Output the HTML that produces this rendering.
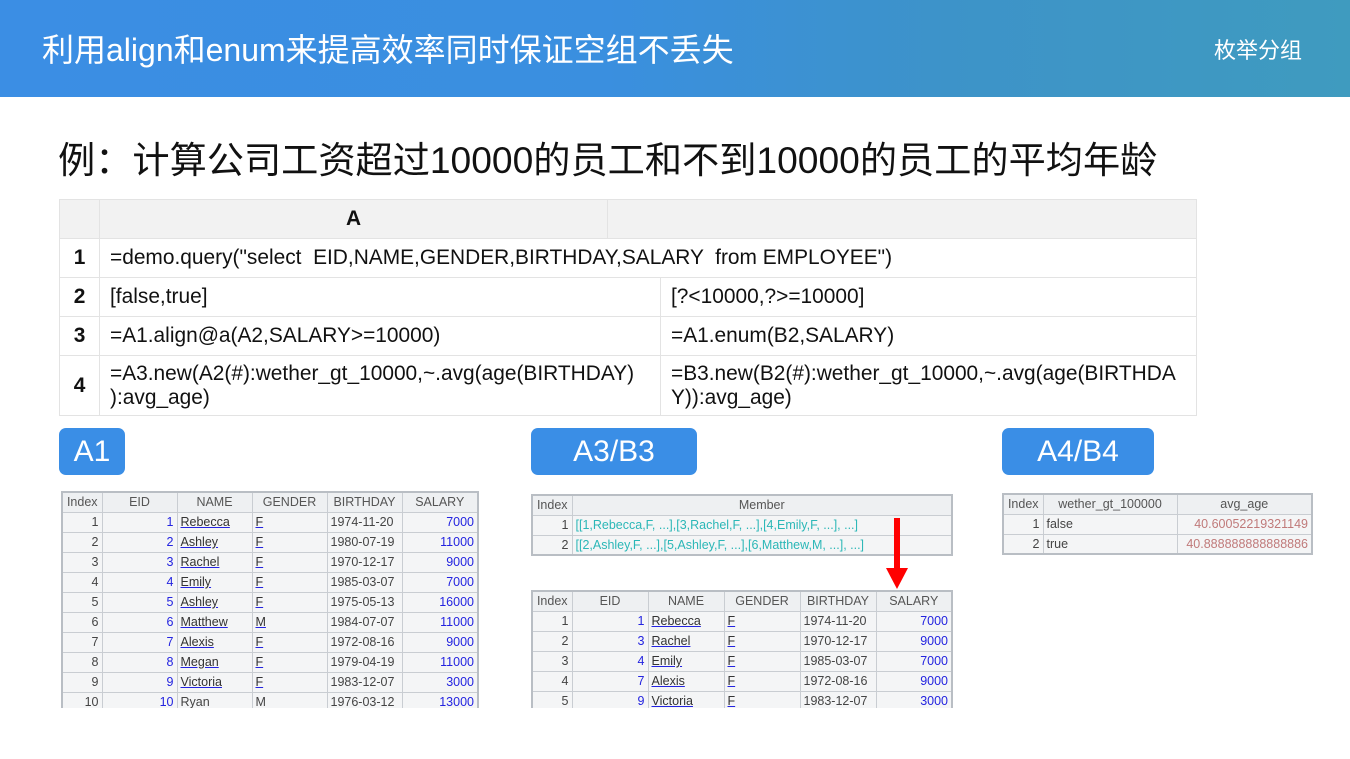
<!DOCTYPE html><html><head><meta charset="utf-8"><style>
*{margin:0;padding:0;box-sizing:border-box}
body{width:1350px;height:759px;background:#fff;position:relative;overflow:hidden;font-family:"Liberation Sans","Noto Sans CJK SC",sans-serif}
.hd{position:absolute;left:0;top:0;width:1350px;height:97px;background:linear-gradient(90deg,#3b8ee4 0%,#3a8fdf 45%,#3d93c9 70%,#3f9bbf 100%)}
.hd .t{position:absolute;left:42px;top:30px;color:#fff;font-size:32px;line-height:40px}
.hd .r{position:absolute;left:1214px;top:33px;color:#fff;font-size:22px}
.ttl{position:absolute;left:58px;top:130px;font-size:37.2px;color:#111}
.ab{position:absolute}
.cell{position:absolute;border:1px solid #e3e3e3;padding:0 10px;display:flex;align-items:center;line-height:24px;font-size:20.9px!important;color:#111}
.badge{position:absolute;background:#3a8ee6;color:#fff;font-size:30px;border-radius:7px;display:flex;align-items:center;justify-content:center;top:428px;height:47px}
table.g{position:absolute;border-collapse:collapse;font-size:12.5px;table-layout:fixed;border:2px solid #b9bec4}
table.g td{border:1px solid #c9cdd2;height:20px;padding:0 3px;white-space:nowrap;overflow:hidden;background:#f4f5f6;color:#444}
table.g tr:first-child td{text-align:center;color:#555;background:#eef0f2}
.n{text-align:right;color:#333}
.b{text-align:right;color:#2323e0!important}
.u{color:#333!important;text-decoration:underline;text-decoration-color:#2323e0}
.cy{color:#2bb7b7!important}
.rd{text-align:right;color:#c07a7a!important}
.k{justify-content:center;font-weight:bold}
</style></head><body>
<div class="hd"><div class="t">利用align和enum来提高效率同时保证空组不丢失</div><div class="r">枚举分组</div></div>
<div class="ttl">例：计算公司工资超过10000的员工和不到10000的员工的平均年龄</div>

<div class="cell" style="left:59px;top:199px;width:41px;height:40px;background:#f2f2f2"></div>
<div class="cell k" style="left:99px;top:199px;width:509px;height:40px;background:#f2f2f2">A</div>
<div class="cell" style="left:607px;top:199px;width:590px;height:40px;background:#f2f2f2"></div>

<div class="cell k" style="left:59px;top:238px;width:41px;height:40px">1</div>
<div class="cell" style="left:99px;top:238px;width:1098px;height:40px">=demo.query("select &nbsp;EID,NAME,GENDER,BIRTHDAY,SALARY &nbsp;from EMPLOYEE")</div>

<div class="cell k" style="left:59px;top:277px;width:41px;height:40px">2</div>
<div class="cell" style="left:99px;top:277px;width:562px;height:40px">[false,true]</div>
<div class="cell" style="left:660px;top:277px;width:537px;height:40px">[?&lt;10000,?&gt;=10000]</div>

<div class="cell k" style="left:59px;top:316px;width:41px;height:40px">3</div>
<div class="cell" style="left:99px;top:316px;width:562px;height:40px">=A1.align@a(A2,SALARY&gt;=10000)</div>
<div class="cell" style="left:660px;top:316px;width:537px;height:40px">=A1.enum(B2,SALARY)</div>

<div class="cell k" style="left:59px;top:355px;width:41px;height:61px">4</div>
<div class="cell" style="left:99px;top:355px;width:562px;height:61px;white-space:nowrap"><span>=A3.new(A2(#):wether_gt_10000,~.avg(age(BIRTHDAY)<br>):avg_age)</span></div>
<div class="cell" style="left:660px;top:355px;width:537px;height:61px;white-space:nowrap"><span>=B3.new(B2(#):wether_gt_10000,~.avg(age(BIRTHDA<br>Y)):avg_age)</span></div>

<div class="badge" style="left:59px;width:66px">A1</div>
<div class="badge" style="left:531px;width:166px">A3/B3</div>
<div class="badge" style="left:1002px;width:152px">A4/B4</div>

<table class="g" style="left:61px;top:491px;width:418px">
<colgroup><col style="width:40px"><col style="width:75px"><col style="width:75px"><col style="width:75px"><col style="width:75px"><col style="width:76px"></colgroup>
<tr><td>Index</td><td>EID</td><td>NAME</td><td>GENDER</td><td>BIRTHDAY</td><td>SALARY</td></tr>
<tr><td class="n">1</td><td class="b">1</td><td class="u">Rebecca</td><td class="u">F</td><td>1974-11-20</td><td class="b">7000</td></tr>
<tr><td class="n">2</td><td class="b">2</td><td class="u">Ashley</td><td class="u">F</td><td>1980-07-19</td><td class="b">11000</td></tr>
<tr><td class="n">3</td><td class="b">3</td><td class="u">Rachel</td><td class="u">F</td><td>1970-12-17</td><td class="b">9000</td></tr>
<tr><td class="n">4</td><td class="b">4</td><td class="u">Emily</td><td class="u">F</td><td>1985-03-07</td><td class="b">7000</td></tr>
<tr><td class="n">5</td><td class="b">5</td><td class="u">Ashley</td><td class="u">F</td><td>1975-05-13</td><td class="b">16000</td></tr>
<tr><td class="n">6</td><td class="b">6</td><td class="u">Matthew</td><td class="u">M</td><td>1984-07-07</td><td class="b">11000</td></tr>
<tr><td class="n">7</td><td class="b">7</td><td class="u">Alexis</td><td class="u">F</td><td>1972-08-16</td><td class="b">9000</td></tr>
<tr><td class="n">8</td><td class="b">8</td><td class="u">Megan</td><td class="u">F</td><td>1979-04-19</td><td class="b">11000</td></tr>
<tr><td class="n">9</td><td class="b">9</td><td class="u">Victoria</td><td class="u">F</td><td>1983-12-07</td><td class="b">3000</td></tr>
<tr><td class="n">10</td><td class="b">10</td><td>Ryan</td><td>M</td><td>1976-03-12</td><td class="b">13000</td></tr>
</table>

<table class="g" style="left:531px;top:494px;width:422px">
<colgroup><col style="width:40px"><col></colgroup>
<tr><td>Index</td><td>Member</td></tr>
<tr><td class="n">1</td><td class="cy">[[1,Rebecca,F, ...],[3,Rachel,F, ...],[4,Emily,F, ...], ...]</td></tr>
<tr><td class="n">2</td><td class="cy">[[2,Ashley,F, ...],[5,Ashley,F, ...],[6,Matthew,M, ...], ...]</td></tr>
</table>

<svg class="ab" style="left:885px;top:518px" width="24" height="72"><rect x="9" y="0" width="6" height="52" fill="#f00"/><polygon points="1,50 23,50 12,71" fill="#f00"/></svg>

<table class="g" style="left:531px;top:590px;width:422px">
<colgroup><col style="width:40px"><col style="width:76px"><col style="width:76px"><col style="width:76px"><col style="width:76px"><col style="width:76px"></colgroup>
<tr><td>Index</td><td>EID</td><td>NAME</td><td>GENDER</td><td>BIRTHDAY</td><td>SALARY</td></tr>
<tr><td class="n">1</td><td class="b">1</td><td class="u">Rebecca</td><td class="u">F</td><td>1974-11-20</td><td class="b">7000</td></tr>
<tr><td class="n">2</td><td class="b">3</td><td class="u">Rachel</td><td class="u">F</td><td>1970-12-17</td><td class="b">9000</td></tr>
<tr><td class="n">3</td><td class="b">4</td><td class="u">Emily</td><td class="u">F</td><td>1985-03-07</td><td class="b">7000</td></tr>
<tr><td class="n">4</td><td class="b">7</td><td class="u">Alexis</td><td class="u">F</td><td>1972-08-16</td><td class="b">9000</td></tr>
<tr><td class="n">5</td><td class="b">9</td><td class="u">Victoria</td><td class="u">F</td><td>1983-12-07</td><td class="b">3000</td></tr>
</table>
<div class="ab" style="left:0;top:708px;width:1350px;height:51px;background:#fff"></div>

<table class="g" style="left:1002px;top:493px;width:311px">
<colgroup><col style="width:40px"><col style="width:134px"><col></colgroup>
<tr><td>Index</td><td>wether_gt_100000</td><td>avg_age</td></tr>
<tr><td class="n">1</td><td>false</td><td class="rd">40.60052219321149</td></tr>
<tr><td class="n">2</td><td>true</td><td class="rd">40.888888888888886</td></tr>
</table>
</body></html>
